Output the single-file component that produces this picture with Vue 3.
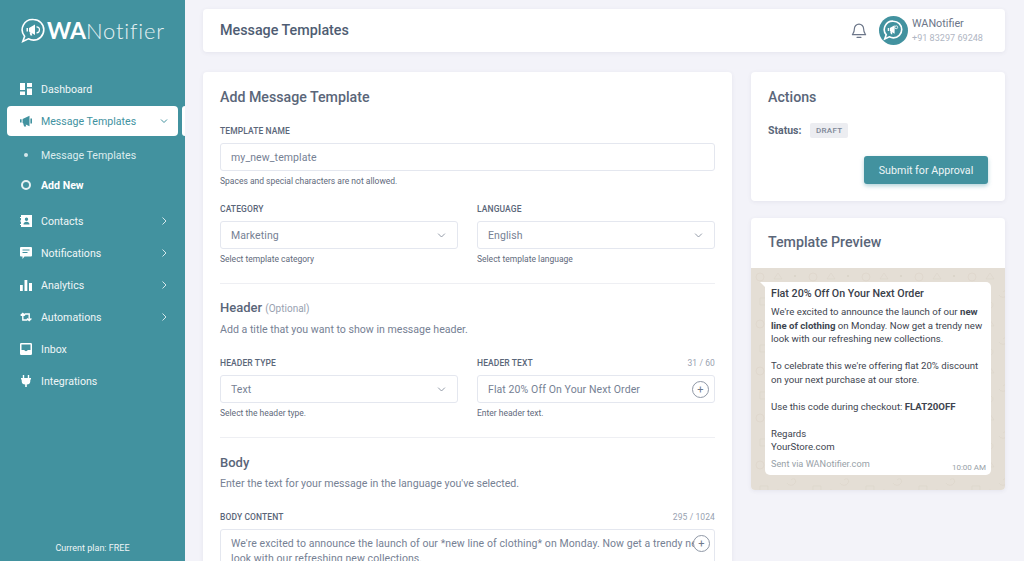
<script setup>
const navTop = [
  { label: 'Contacts', icon: 'contacts' },
  { label: 'Notifications', icon: 'chat' },
  { label: 'Analytics', icon: 'bars' },
  { label: 'Automations', icon: 'loop' },
]
</script>

<template>
  <div class="app">
    <aside class="sidebar">
      <div class="logo">
        <svg class="logo-mark" width="24" height="26" viewBox="0 0 24 26">
          <path d="M12.500 1.500a10.300 10.300 0 0 1 0 20.600c-1.900 0-3.600-.5-5.100-1.300L1.800 23.500l1.800-5.200A10.300 10.300 0 0 1 12.500 1.500z" fill="none" stroke="#fff" stroke-width="1.600" />
          <path d="M5.500 10h1.500v3.500H5.500zM8 10l6-3.500V17l-6-3.500zM8.500 14.500h2l.8 3h-1.800z" fill="#fff" />
          <path d="M15.500 8.800a3 3 0 0 1 0 6" fill="none" stroke="#fff" stroke-width="1.200" />
        </svg>
        <span class="logo-text"><b>WA</b>Notifier</span>
      </div>
      <nav class="nav">
        <div class="nav-row">
          <svg class="ico" viewBox="0 0 12 12"><path d="M0 0h5v7H0zM7 0h5v4H7zM0 8.500h5V12H0zM7 5.500h5V12H7z" fill="#fff" /></svg>
          <span>Dashboard</span>
        </div>
        <div class="nav-active-wrap">
          <div class="nav-row active">
            <svg class="ico" viewBox="0 0 12 12"><path d="M0 4.200h1.600v3.200H0zM2.600 4l6.900-3.200v10.400L2.600 8zM10.400 3.500H12v5h-1.600zM3.200 8.600h2.200l.8 2.900H4.100z" fill="#42929f" /></svg>
            <span class="grow">Message Templates</span>
            <svg class="chev" viewBox="0 0 10 10"><path d="M2 3.500l3 3 3-3" fill="none" stroke="#42929f" stroke-width="1" /></svg>
          </div>
          <div class="nub"></div>
        </div>
        <div class="sub-row first">
          <span class="dot-wrap"><i class="dot"></i></span>
          <span>Message Templates</span>
        </div>
        <div class="sub-row strong">
          <span class="dot-wrap"><i class="ring"></i></span>
          <span>Add New</span>
        </div>
        <div class="nav-group">
          <div v-for="item in navTop" :key="item.label" class="nav-row">
            <svg v-if="item.icon === 'contacts'" class="ico" viewBox="0 0 12 12"><path fill-rule="evenodd" d="M1 0h11v12H1V10H0V9h1V6.500H0v-1h1V3H0V2h1zm5.500 2.500a1.700 1.700 0 1 0 0 3.400 1.700 1.700 0 0 0 0-3.400zM3.500 9.500h6c0-2-1.300-2.800-3-2.800s-3 .8-3 2.800z" fill="#fff" /></svg>
            <svg v-else-if="item.icon === 'chat'" class="ico" viewBox="0 0 12 12"><path fill-rule="evenodd" d="M1 0h10a1 1 0 0 1 1 1v7.500a1 1 0 0 1-1 1H4.500L2.500 12V9.500H1a1 1 0 0 1-1-1V1a1 1 0 0 1 1-1zm1.500 2.500v1h7v-1zm0 2.500v1h5V5z" fill="#fff" /></svg>
            <svg v-else-if="item.icon === 'bars'" class="ico" viewBox="0 0 12 12"><path d="M0 6h2.800v6H0zM4.500 1h2.800v11H4.500zM9 4h3v8H9z" fill="#fff" /></svg>
            <svg v-else class="ico" viewBox="0 0 12 12"><path d="M.6 4.600 2.800 2.400 5 4.600M2.800 2.600V9H7.400M11.400 7.400 9.200 9.600 7 7.400M9.200 9.400V3H4.600" fill="none" stroke="#fff" stroke-width="1.400" /></svg>
            <span class="grow">{{ item.label }}</span>
            <svg class="chev" viewBox="0 0 10 10"><path d="M3.500 1.500l3.500 3.500-3.500 3.500" fill="none" stroke="#d5e8eb" stroke-width="1" /></svg>
          </div>
          <div class="nav-row">
            <svg class="ico" viewBox="0 0 12 12"><path fill-rule="evenodd" d="M1.300 0h9.400A1.300 1.300 0 0 1 12 1.300v9.400a1.300 1.300 0 0 1-1.300 1.300H1.300A1.300 1.300 0 0 1 0 10.700V1.300A1.300 1.300 0 0 1 1.300 0zM1.500 1.500v5.500h2.700a2 2 0 0 0 3.600 0h2.700V1.500z" fill="#fff" /></svg>
            <span>Inbox</span>
          </div>
          <div class="nav-row">
            <svg class="ico" viewBox="0 0 12 12"><path d="M2.800 0h1.400v3h3.600V0h1.400v3H11v1.500h-.7v1.800A3.500 3.500 0 0 1 6.800 9.600V12H5.200V9.600a3.500 3.500 0 0 1-3.500-3.300V4.500H1V3h1.800z" fill="#fff" /></svg>
            <span>Integrations</span>
          </div>
        </div>
      </nav>
      <div class="plan">Current plan: FREE</div>
    </aside>

    <main class="main">
      <header class="topbar">
        <h1>Message Templates</h1>
        <div class="top-right">
          <svg class="bell" width="16" height="16" viewBox="0 0 16 16"><path d="M8 1.200a4.600 4.600 0 0 0-4.600 4.600c0 3.700-1.700 5.300-2 5.900h13.200c-.3-.6-2-2.200-2-5.900A4.600 4.600 0 0 0 8 1.200zM6 14.300h4" fill="none" stroke="#6c7689" stroke-width="1.200" stroke-linecap="round" stroke-linejoin="round" /></svg>
          <div class="avatar">
            <svg width="20" height="21" viewBox="0 0 24 26">
              <path d="M12.500 1.500a10.300 10.300 0 0 1 0 20.600c-1.900 0-3.600-.5-5.100-1.300L1.800 23.500l1.800-5.200A10.300 10.300 0 0 1 12.500 1.500z" fill="none" stroke="#fff" stroke-width="2" />
              <path d="M5.500 10h1.500v3.500H5.500zM8 10l6-3.500V17l-6-3.500zM8.500 14.500h2l.8 3h-1.800z" fill="#fff" />
              <circle cx="16" cy="9" r="1.800" fill="none" stroke="#fff" stroke-width="1" />
            </svg>
          </div>
          <div class="who">
            <div class="who-name">WANotifier</div>
            <div class="who-phone">+91 83297 69248</div>
          </div>
        </div>
      </header>

      <div class="columns">
        <section class="card form">
          <h2>Add Message Template</h2>
          <div class="field first-field">
            <label>TEMPLATE NAME</label>
            <div class="input">my_new_template</div>
            <p class="hint">Spaces and special characters are not allowed.</p>
          </div>
          <div class="two">
            <div class="field">
              <label>CATEGORY</label>
              <div class="input select">Marketing<svg viewBox="0 0 12 12"><path d="M1.500 3.500 6 8l4.500-4.500" fill="none" stroke="#7d8797" stroke-width="1.100" /></svg></div>
              <p class="hint">Select template category</p>
            </div>
            <div class="field">
              <label>LANGUAGE</label>
              <div class="input select">English<svg viewBox="0 0 12 12"><path d="M1.500 3.500 6 8l4.500-4.500" fill="none" stroke="#7d8797" stroke-width="1.100" /></svg></div>
              <p class="hint">Select template language</p>
            </div>
          </div>
          <hr />
          <h3>Header <small>(Optional)</small></h3>
          <p class="desc">Add a title that you want to show in message header.</p>
          <div class="two after-desc">
            <div class="field">
              <label>HEADER TYPE</label>
              <div class="input select">Text<svg viewBox="0 0 12 12"><path d="M1.500 3.500 6 8l4.500-4.500" fill="none" stroke="#7d8797" stroke-width="1.100" /></svg></div>
              <p class="hint">Select the header type.</p>
            </div>
            <div class="field">
              <label class="split">HEADER TEXT <em>31 / 60</em></label>
              <div class="input with-plus">Flat 20% Off On Your Next Order<span class="plus">+</span></div>
              <p class="hint">Enter header text.</p>
            </div>
          </div>
          <hr />
          <h3 class="body-title">Body</h3>
          <p class="desc">Enter the text for your message in the language you've selected.</p>
          <div class="field body-field">
            <label class="split">BODY CONTENT <em>295 / 1024</em></label>
            <div class="input area">
              <div class="area-text">We're excited to announce the launch of our *new line of clothing* on Monday. Now get a trendy new<br />look with our refreshing new collections.</div>
              <span class="plus">+</span>
            </div>
          </div>
        </section>

        <div class="side">
          <section class="card actions">
            <h2>Actions</h2>
            <div class="status"><b>Status:</b><span class="badge">DRAFT</span></div>
            <div class="btn-row"><button class="btn">Submit for Approval</button></div>
          </section>
          <section class="card preview">
            <h2>Template Preview</h2>
            <div class="wall">
              <svg class="doodle" width="254" height="222" aria-hidden="true">
                <defs>
                  <pattern id="wp" width="53" height="47" patternUnits="userSpaceOnUse">
                    <circle cx="9" cy="9" r="4" fill="none" stroke="#dcd5ca" stroke-width=".7" />
                    <path d="M27 5l4 6h-8zM40 24c3-3 6 0 4 3s-6 3-8 0M9 30h8v7H9zM27 34a3 3 0 1 0 .1 0" fill="none" stroke="#dcd5ca" stroke-width=".7" />
                    <circle cx="44" cy="8" r="1.200" fill="#dcd5ca" />
                  </pattern>
                </defs>
                <rect width="254" height="222" fill="url(#wp)" />
              </svg>
              <div class="bubble">
                <div class="b-title">Flat 20% Off On Your Next Order</div>
                <p>We're excited to announce the launch of our <b>new line of clothing</b> on Monday. Now get a trendy new look with our refreshing new collections.</p>
                <p>To celebrate this we're offering flat 20% discount on your next purchase at our store.</p>
                <p>Use this code during checkout: <b>FLAT20OFF</b></p>
                <p>Regards<br />YourStore.com</p>
                <div class="b-foot"><span>Sent via WANotifier.com</span><span class="time">10:00 AM</span></div>
              </div>
            </div>
          </section>
        </div>
      </div>
    </main>
  </div>
</template>

<style>
html, body { margin: 0; height: 100%; overflow: hidden; background: #f3f3f9; }
</style>

<style scoped>
.app { display: flex; height: 561px; overflow: hidden; font-family: Roboto, "Liberation Sans", sans-serif; background: #f3f3f9; color: #4f5d73; }
.sidebar { width: 185px; flex: none; background: #42929f; display: flex; flex-direction: column; color: #fff; position: relative; }
.logo { display: flex; align-items: center; gap: 2px; padding: 17px 0 0 21px; height: 27px; }
.logo-text { font-family: Lato, sans-serif; font-size: 22px; font-weight: 300; letter-spacing: .8px; color: #e6f1f3; line-height: 27px; }
.logo-text b { font-weight: 700; color: #fff; font-size: 23px; letter-spacing: 0; }
.nav { padding-top: 29px; font-size: 10.6px; }
.nav-row { display: flex; align-items: center; height: 32px; padding-left: 20px; padding-right: 16px; color: #f0f6f7; }
.nav-row .ico { width: 12px; height: 12px; margin-right: 9px; flex: none; }
.grow { flex: 1; }
.chev { width: 10px; height: 10px; flex: none; }
.nav-active-wrap { position: relative; margin: 1px 0 0 7px; height: 30px; }
.nav-row.active { width: 171px; height: 30px; padding-left: 13px; padding-right: 9px; box-sizing: border-box; background: #fff; border-radius: 4px; color: #42929f; }
.nub { position: absolute; left: 175px; top: 0; width: 3px; height: 30px; background: #fff; border-radius: 3px 0 0 3px; }
.sub-row { display: flex; align-items: center; height: 30px; padding-left: 20px; color: #dcecee; }
.sub-row.first { margin-top: 4px; }
.sub-row.strong { color: #fff; font-weight: 700; }
.dot-wrap { width: 12px; margin-right: 9px; display: flex; justify-content: center; }
.dot { width: 4px; height: 4px; border-radius: 50%; background: #d5e8eb; }
.ring { width: 6px; height: 6px; border: 2px solid #e6f1f3; border-radius: 50%; }
.nav-group { margin-top: 5px; }
.plan { position: absolute; left: 0; right: 0; bottom: 8px; text-align: center; font-size: 9px; color: #eef5f6; }
.main { flex: 1; min-width: 0; padding: 9px 19px 0 18px; }
.topbar { height: 43px; background: #fff; border-radius: 4px; box-shadow: 0 1px 4px rgba(60,70,100,.08); display: flex; align-items: center; justify-content: space-between; padding: 0 22px 0 17px; }
h1 { margin: 0 0 2px; font-size: 14.3px; font-weight: 500; color: #4f5d73; }
.top-right { display: flex; align-items: center; }
.bell { margin-right: 12px; }
.avatar { width: 29px; height: 29px; border-radius: 50%; background: #42929f; display: flex; align-items: center; justify-content: center; margin-right: 4px; }
.who-name { font-size: 10.8px; color: #6c7689; line-height: 15px; }
.who-phone { font-size: 9.1px; color: #b0b6c3; line-height: 15px; }
.columns { display: flex; gap: 19px; margin-top: 20px; align-items: flex-start; }
.card { background: #fff; border-radius: 4px; box-shadow: 0 1px 4px rgba(60,70,100,.08); }
.form { width: 529px; flex: none; box-sizing: border-box; padding: 16px 17px 0; height: 600px; }
h2 { margin: 0; font-size: 14.2px; font-weight: 500; color: #5a6679; line-height: 18px; }
.field { min-width: 0; }
.field label { display: block; font-size: 8.5px; font-weight: 500; color: #5a6679; line-height: 12px; letter-spacing: .1px; }
.split { display: flex !important; justify-content: space-between; }
.split em { font-style: normal; color: #98a1b0; font-weight: 400; }
.first-field { margin-top: 19px; }
.input { margin-top: 6px; height: 28px; box-sizing: border-box; border: 1px solid #e4e7ef; border-radius: 3px; padding: 0 10px; display: flex; align-items: center; font-size: 10.5px; color: #768194; position: relative; letter-spacing: .1px; }
.select svg { position: absolute; right: 11px; top: 9px; width: 9px; height: 9px; }
.hint { margin: 5px 0 0; font-size: 8.5px; color: #5f6a7c; line-height: 10px; }
.two { display: grid; grid-template-columns: 238px 238px; gap: 19px; margin-top: 17px; }
.two.after-desc { margin-top: 20px; }
hr { border: 0; border-top: 1px solid #eeeff3; margin: 19px 0 0; }
h3 { margin: 16px 0 0; font-size: 13px; font-weight: 500; color: #5a6679; line-height: 16px; }
h3.body-title { margin-top: 17px; }
h3 small { font-size: 10px; font-weight: 400; color: #98a1b0; }
.desc { margin: 6px 0 0; font-size: 10.6px; color: #768194; line-height: 14px; }
.body-field { margin-top: 20px; }
.with-plus { padding-right: 30px; }
.plus { position: absolute; right: 5px; top: 4.5px; width: 17px; height: 17px; box-sizing: border-box; border: 1px solid #8f98a6; border-radius: 50%; background: #fff; display: flex; align-items: center; justify-content: center; font-size: 11px; color: #6f7a8c; line-height: 1; }
.area { height: 70px; display: block; padding: 6px 10px; overflow: hidden; letter-spacing: .08px; }
.area-text { line-height: 15px; white-space: nowrap; }
.area .plus { right: 4px; }
.side { width: 254px; flex: none; display: flex; flex-direction: column; gap: 17px; }
.actions { height: 129px; box-sizing: border-box; padding: 16px 17px; }
.status { display: flex; align-items: center; margin-top: 17px; font-size: 10.5px; color: #5a6679; }
.status b { font-weight: 700; margin-right: 9px; }
.badge { background: #ecedf1; color: #7d8797; font-size: 8px; font-weight: 500; height: 15px; line-height: 15px; padding: 0 5.5px; border-radius: 2px; letter-spacing: .3px; }
.btn-row { display: flex; justify-content: flex-end; margin-top: 18px; }
.btn { width: 124px; height: 28px; border: 0; border-radius: 3px; background: #42929f; color: #eef5f6; font-family: inherit; font-size: 10.7px; box-shadow: 0 2px 4px rgba(66,146,159,.4); padding: 0; }
.preview { height: 272px; overflow: hidden; box-sizing: border-box; padding-top: 15px; }
.preview h2 { padding-left: 17px; }
.wall { margin-top: 17px; height: 222px; background: #e4ded5; padding: 14px 0 0 14px; box-sizing: border-box; position: relative; }
.doodle { position: absolute; left: 0; top: 0; }
.bubble { background: #fff; border-radius: 0 5px 5px 5px; height: 193px; box-sizing: border-box; padding: 4px 4px 0 6px; position: relative; font-size: 9.65px; line-height: 13.5px; color: #3e4550; width: 226px; }
.bubble::before { content: ""; position: absolute; left: -5px; top: 0; border-top: 5px solid #fff; border-left: 5px solid transparent; }
.b-title { font-size: 10.7px; font-weight: 500; color: #3a404a; line-height: 16px; margin-bottom: 3px; }
.bubble p { margin: 0 0 13.5px; }
.bubble p:nth-of-type(4) { margin-bottom: 3px; }
.bubble b { font-weight: 700; }
.b-foot { display: flex; justify-content: space-between; color: #98a1a8; font-size: 9.2px; }
.time { font-size: 8px; position: absolute; right: 5px; bottom: 1px; }
</style>
